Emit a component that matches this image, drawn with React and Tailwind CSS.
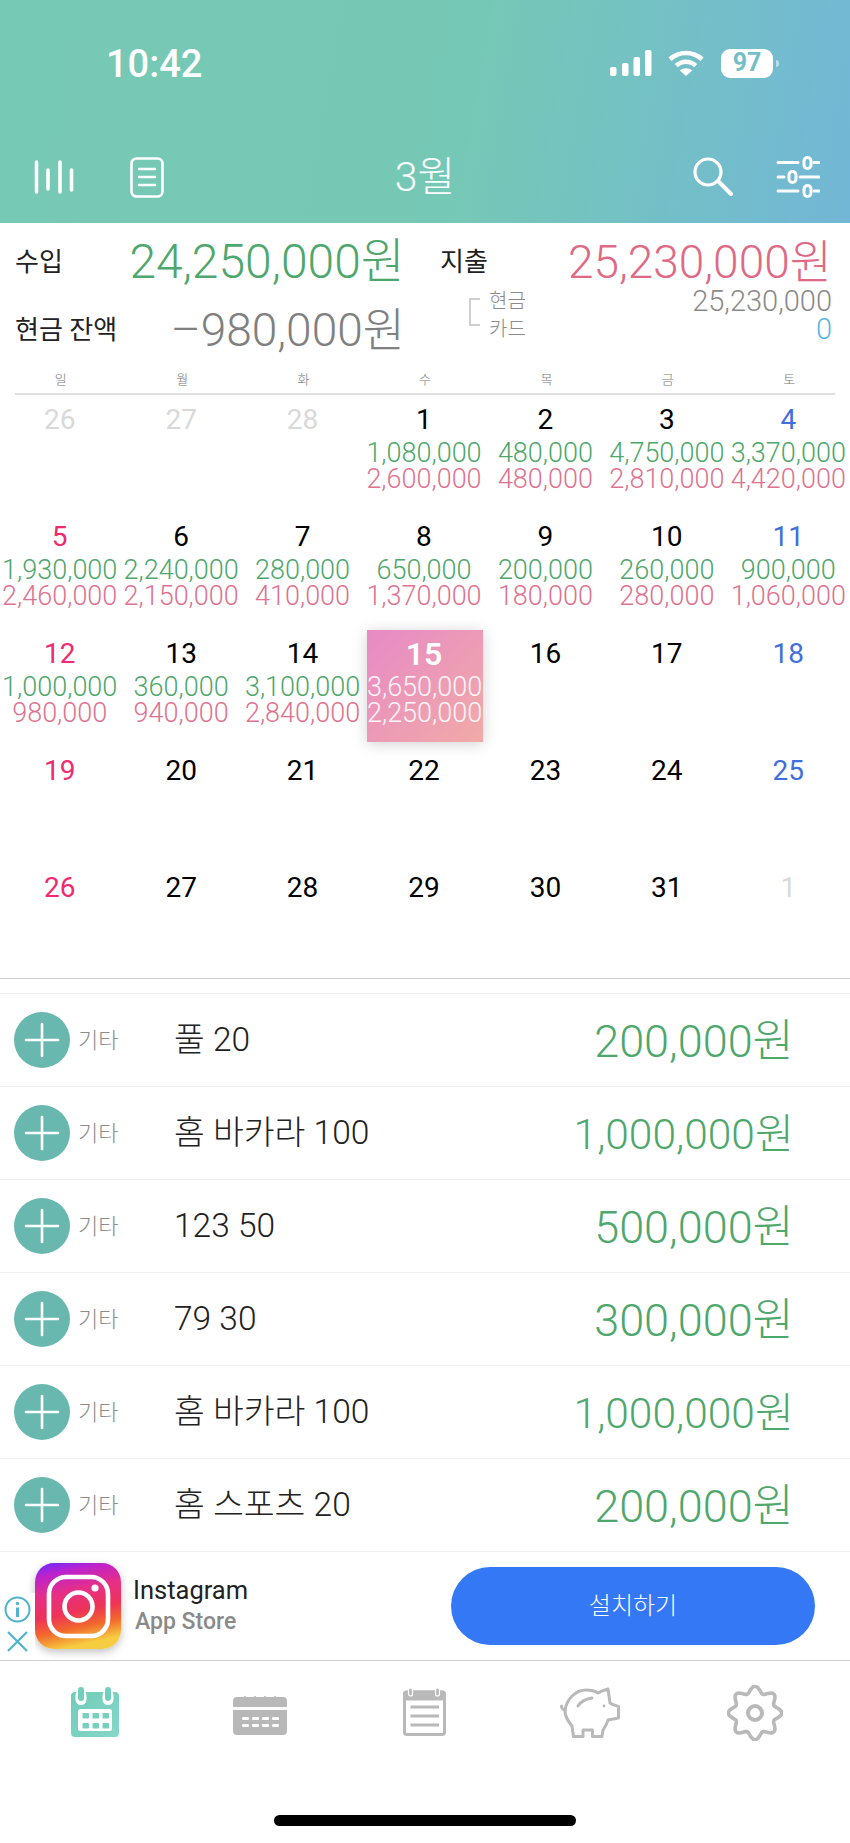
import React from "react";

const WEEK = ["일", "월", "화", "수", "목", "금", "토"];
const G = "text-[#4ea76c]";
const R = "text-[#de7390]";

const DAYS = [
  { d: "26", c: "text-[#d9d9d9]" }, { d: "27", c: "text-[#d9d9d9]" }, { d: "28", c: "text-[#d9d9d9]" },
  { d: "1", a: "1,080,000", b: "2,600,000" }, { d: "2", a: "480,000", b: "480,000" }, { d: "3", a: "4,750,000", b: "2,810,000" },
  { d: "4", c: "text-[#3f6fdc]", a: "3,370,000", b: "4,420,000" },
  { d: "5", c: "text-[#ef2a6f]", a: "1,930,000", b: "2,460,000" }, { d: "6", a: "2,240,000", b: "2,150,000" }, { d: "7", a: "280,000", b: "410,000" },
  { d: "8", a: "650,000", b: "1,370,000" }, { d: "9", a: "200,000", b: "180,000" }, { d: "10", a: "260,000", b: "280,000" },
  { d: "11", c: "text-[#3f6fdc]", a: "900,000", b: "1,060,000" },
  { d: "12", c: "text-[#ef2a6f]", a: "1,000,000", b: "980,000" }, { d: "13", a: "360,000", b: "940,000" }, { d: "14", a: "3,100,000", b: "2,840,000" },
  { d: "15", sel: true, a: "3,650,000", b: "2,250,000" }, { d: "16" }, { d: "17" }, { d: "18", c: "text-[#3f6fdc]" },
  { d: "19", c: "text-[#ef2a6f]" }, { d: "20" }, { d: "21" }, { d: "22" }, { d: "23" }, { d: "24" }, { d: "25", c: "text-[#3f6fdc]" },
  { d: "26", c: "text-[#ef2a6f]" }, { d: "27" }, { d: "28" }, { d: "29" }, { d: "30" }, { d: "31" }, { d: "1", c: "text-[#d9d9d9]" },
];

const ROWS = [
  ["풀 20", "200,000원", "text-[45px]"],
  ["홈 바카라 100", "1,000,000원", "text-[42.5px]"],
  ["123 50", "500,000원", "text-[45px]"],
  ["79 30", "300,000원", "text-[45px]"],
  ["홈 바카라 100", "1,000,000원", "text-[42.5px]"],
  ["홈 스포츠 20", "200,000원", "text-[45px]"],
];

function gearPath() {
  const pts = [];
  for (let i = 0; i < 160; i++) {
    const t = (i / 160) * Math.PI * 2;
    const r = 23.5 + 3.2 * Math.cos(8 * t);
    pts.push(`${(28 + r * Math.sin(t)).toFixed(2)},${(28 - r * Math.cos(t)).toFixed(2)}`);
  }
  return "M" + pts.join("L") + "Z";
}

const Signal = () => (
  <svg width="42" height="26" viewBox="0 0 42 26" fill="white">
    <rect x="0" y="17" width="6.5" height="9" rx="2" />
    <rect x="12" y="13" width="6.5" height="13" rx="2" />
    <rect x="23.5" y="7" width="6.5" height="19" rx="2" />
    <rect x="35" y="0" width="6.5" height="26" rx="2" />
  </svg>
);
const Wifi = () => (
  <svg width="36" height="26" viewBox="0 0 36 26" fill="none" stroke="white" strokeWidth="4.6">
    <path d="M2 9.2C11 .9 25 .9 34 9.2" />
    <path d="M8.3 15.6C14 10.4 22 10.4 27.7 15.6" />
    <path d="M18 26L11.8 20.4C15.4 17.6 20.6 17.6 24.2 20.4Z" fill="white" stroke="none" />
  </svg>
);
const BarsIcon = () => (
  <svg width="40" height="34" viewBox="0 0 40 34" stroke="white" strokeWidth="3.6" strokeLinecap="round">
    <path d="M2.5 2V32M14 10V29M26 2V32M37.5 10V30" />
  </svg>
);
const DocIcon = () => (
  <svg width="34" height="41" viewBox="0 0 34 41" fill="none" stroke="white" strokeWidth="2.6" strokeLinecap="round">
    <rect x="1.5" y="1.5" width="31" height="38" rx="5" />
    <path d="M9 12H25M9 20H25M9 28H25" />
  </svg>
);
const SearchIcon = () => (
  <svg width="40" height="40" viewBox="0 0 40 40" fill="none" stroke="white" strokeWidth="3.2" strokeLinecap="round">
    <circle cx="15" cy="15" r="13" />
    <path d="M26 25L38 37" strokeWidth="4" />
  </svg>
);
const SlidersIcon = () => (
  <svg width="44" height="42" viewBox="0 0 44 42" fill="none" stroke="white" strokeWidth="3" strokeLinecap="round">
    <path d="M2 6.5H22M38 6.5H43M2 21H8M24 21H43M2 35H22M38 35H43" />
    <rect x="28" y="1.5" width="7" height="11" rx="3.5" />
    <rect x="13" y="15.5" width="7" height="11" rx="3.5" />
    <rect x="28" y="29.5" width="7" height="11" rx="3.5" />
  </svg>
);

const TabCalendar = () => (
  <svg width="48" height="50" viewBox="0 0 48 50">
    <defs>
      <linearGradient id="tabg" x1="0" y1="0" x2="1" y2="1">
        <stop offset="0" stopColor="#6fcdb8" />
        <stop offset="1" stopColor="#86d6c8" />
      </linearGradient>
    </defs>
    <rect x="0" y="5" width="48" height="45" rx="4" fill="url(#tabg)" />
    <rect x="4.5" y="3" width="11" height="15" rx="5.5" fill="white" />
    <rect x="31.5" y="3" width="11" height="15" rx="5.5" fill="white" />
    <rect x="7" y="0" width="6" height="14" rx="3" fill="#72cfbb" />
    <rect x="34" y="0" width="6" height="14" rx="3" fill="#72cfbb" />
    <rect x="7" y="22" width="34" height="22" rx="2.5" fill="white" />
    {[11.5, 21.5, 31.5].map((x) =>
      [26, 36].map((y) => <rect key={x + "-" + y} x={x} y={y} width="6.5" height="5.5" rx="1" fill="#76d0bd" />)
    )}
  </svg>
);
const TabMonth = () => (
  <svg className="mt-[8px]" width="54" height="40" viewBox="0 0 54 40" fill="#b8b8b8">
    <path d="M0 11V5a4 4 0 0 1 4-4h46a4 4 0 0 1 4 4v6Z" />
    <path d="M0 14H54V35a4 4 0 0 1-4 4H4a4 4 0 0 1-4-4Z" />
    {[12, 22, 32, 42].map((x) => <rect key={x} x={x - 0.8} y="0" width="1.6" height="3" />)}
    {[9, 19, 29, 39].map((x) =>
      [21, 28].map((y) => <rect key={x + "-" + y} x={x} y={y} width="7" height="3" rx="1.2" fill="white" />)
    )}
  </svg>
);
const TabNote = () => (
  <svg width="43" height="48" viewBox="0 0 43 48" fill="none" stroke="#b9b9b9" strokeWidth="3">
    <rect x="1.5" y="4" width="40" height="42.5" rx="2.5" />
    <path d="M1.5 6.5a2.5 2.5 0 0 1 2.5-2.5H39a2.5 2.5 0 0 1 2.5 2.5V11H1.5Z" fill="#b9b9b9" />
    <path d="M7.5 19H36M7.5 28H36M7.5 37H36" />
    <rect x="5.5" y="0" width="4" height="8" rx="2" fill="#b9b9b9" stroke="white" strokeWidth="1.2" />
    <rect x="32.5" y="0" width="4" height="8" rx="2" fill="#b9b9b9" stroke="white" strokeWidth="1.2" />
  </svg>
);
const TabPig = () => (
  <svg width="60" height="51" viewBox="0 0 60 51" fill="none" stroke="#b9b9b9" strokeWidth="3" strokeLinejoin="round" strokeLinecap="round">
    <path d="M48 2L50 16C53 18 54 18 58.5 19.5V31L48 33C47 37 45 40 43 43L42 49.5H32.5V43H23V49.5H13.5L12 39C8 34 5 30 5 24C6 12 16 3 26 3C31 3 35 4 38 6C41 4 44 3 48 2Z" />
    <path d="M5 23C3 23 1.5 21 1.5 19" />
    <path d="M18 19C21 14 26 12 32 11" />
    <circle cx="44" cy="19" r="1.4" fill="#b9b9b9" stroke="none" />
  </svg>
);
const TabGear = () => (
  <svg className="mt-[2px]" width="56" height="56" viewBox="0 0 56 56" fill="none" stroke="#b9b9b9">
    <path d={gearPath()} strokeWidth="3.6" strokeLinejoin="round" />
    <circle cx="28" cy="28" r="7" strokeWidth="4" />
  </svg>
);

const InstaIcon = () => (
  <svg width="86" height="86" viewBox="0 0 86 86" className="block">
    <defs>
      <linearGradient id="ig" x1="0.1" y1="0" x2="0.32" y2="1">
        <stop offset="0" stopColor="#6a2cf8" />
        <stop offset="0.14" stopColor="#bb22cf" />
        <stop offset="0.38" stopColor="#e62f86" />
        <stop offset="0.62" stopColor="#ee3358" />
        <stop offset="0.8" stopColor="#f2682c" />
        <stop offset="1" stopColor="#f6cd40" />
      </linearGradient>
    </defs>
    <rect width="86" height="86" rx="19" fill="url(#ig)" />
    <rect x="14" y="14" width="59" height="59" rx="17" fill="none" stroke="white" strokeWidth="4.6" />
    <circle cx="43.5" cy="43.5" r="14" fill="none" stroke="white" strokeWidth="4.6" />
    <circle cx="60" cy="25" r="3.6" fill="white" />
  </svg>
);

function Cell({ x }) {
  const inner = (
    <>
      <div className={`h-[28px] leading-[28px] ${x.sel ? "text-[32px] font-semibold text-white" : `text-[28px] font-normal ${x.c || "text-black"}`}`}>{x.d}</div>
      <div className={`mt-[6px] text-[27px] leading-[26px] ${x.sel ? "text-white/90" : G}`}>{x.a}</div>
      <div className={`text-[27px] leading-[26px] ${x.sel ? "text-white/90" : R}`}>{x.b}</div>
    </>
  );
  return (
    <div className="whitespace-nowrap text-center">
      {x.sel ? (
        <div className="mx-auto h-[112px] w-[116px] bg-[linear-gradient(135deg,#e78ac5,#f1aaa8)] pr-[2px] pt-[10px] shadow-[0_2px_14px_rgba(0,0,0,0.18)]">{inner}</div>
      ) : (
        <div className="pr-[2px] pt-[10px]">{inner}</div>
      )}
    </div>
  );
}

export default function App() {
  return (
    <div className="relative h-[1843px] w-[850px] overflow-hidden bg-white font-['Roboto','Noto_Sans_CJK_KR',sans-serif] font-light">
      <header className="h-[223px] bg-[linear-gradient(100deg,#76c9b4_0%,#76c8b6_55%,#72b7d6_100%)] pt-[48px]">
        <div className="flex h-[30px] items-center pl-[106px] pr-[77px]">
          <span className="pt-[1px] text-[38px] font-medium leading-none text-white">10:42</span>
          <div className="ml-auto flex items-center">
            <Signal />
            <div className="ml-[16px]"><Wifi /></div>
            <div className="relative ml-[17px] flex h-[29px] w-[52px] items-center justify-center rounded-[9px] bg-white text-[25px] font-bold text-[#74bfc6]">
              97
              <div className="absolute right-[-6px] top-[11px] h-[7px] w-[3px] rounded-r-full bg-white/50" />
            </div>
          </div>
        </div>
        <div className="mt-[78px] grid h-[42px] grid-cols-3 items-center pl-[34px] pr-[30px]">
          <div className="flex items-center gap-[56px]"><BarsIcon /><DocIcon /></div>
          <div className="pr-[4px] text-center text-[41px] leading-none text-white">3월</div>
          <div className="flex items-center justify-end gap-[43px]"><SearchIcon /><SlidersIcon /></div>
        </div>
      </header>

      <section className="h-[173px]">
        <div className="flex h-[143px] pl-[15px] pt-[17px]">
          <div className="w-[390px]">
            <div className="flex h-[44px] items-center justify-between">
              <span className="text-[26px] font-normal text-[#222]">수입</span>
              <span className={`text-[48px] leading-none ${G}`}>24,250,000원</span>
            </div>
            <div className="mt-[24px] flex h-[44px] items-center justify-between">
              <span className="text-[26px] font-normal text-[#222]">현금 잔액</span>
              <span className="text-[46px] leading-none text-[#808080]">–980,000원</span>
            </div>
          </div>
          <div className="ml-[35px] w-[392px]">
            <div className="flex h-[44px] items-center justify-between">
              <span className="text-[26px] font-normal text-[#222]">지출</span>
              <span className="text-[46px] leading-none text-[#de6a86]">25,230,000원</span>
            </div>
            <div className="mt-[3px] flex">
              <div className="ml-[29px] mt-[11px] h-[28px] w-[11px] border-y-2 border-l-2 border-[#cfcfcf]" />
              <div className="ml-[9px] text-[20px] leading-[28px] text-[#8a8a8a]">
                <div>현금</div>
                <div>카드</div>
              </div>
              <div className="ml-auto text-right text-[29px] leading-[28px]">
                <div className="text-[#8a8a8a]">25,230,000</div>
                <div className="text-[#5eb6dc]">0</div>
              </div>
            </div>
          </div>
        </div>
        <div className="grid h-[27px] grid-cols-7 items-center text-center text-[13px] text-[#777]">
          {WEEK.map((w) => <div key={w}>{w}</div>)}
        </div>
        <div className="mx-[15px] h-[2px] bg-[#e0e0e0]" />
      </section>

      <section className="grid h-[583px] grid-cols-7 auto-rows-[117px] overflow-hidden border-b border-[#cfcfcf]">
        {DAYS.map((x, i) => <Cell key={i} x={x} />)}
      </section>

      <section className="mt-[14px] border-t border-[#f0f0f0]">
        {ROWS.map(([t, v, s], i) => (
          <div key={i} className="flex h-[93px] items-center border-b border-[#f0f0f0] pl-[14px] pr-[56px]">
            <div className="flex h-[56px] w-[56px] items-center justify-center rounded-full bg-[#69b8b0]">
              <svg width="36" height="36" viewBox="0 0 36 36" stroke="white" strokeWidth="2.6" strokeLinecap="round">
                <path d="M18 2V34M2 18H34" />
              </svg>
            </div>
            <span className="ml-[8px] w-[96px] text-[22px] text-[#8c8c8c]">기타</span>
            <span className="pt-[1px] text-[33.5px] text-[#222]">{t}</span>
            <span className={`ml-auto pt-[3px] ${s} ${G}`}>{v}</span>
          </div>
        ))}
      </section>

      <section className="relative flex h-[109px] items-center border-b border-[#cfcfcf] pl-[35px] pr-[35px]">
        <div className="rounded-[19px] shadow-[0_3px_8px_rgba(0,0,0,0.25)]"><InstaIcon /></div>
        <div className="ml-[12px] pb-[3px]">
          <div className="text-[25.5px] font-normal leading-[30px] text-[#222]">Instagram</div>
          <div className="ml-[2px] mt-[4px] text-[23px] font-medium leading-[26px] text-[#8a8a8a]">App Store</div>
        </div>
        <button className="ml-auto h-[78px] w-[364px] rounded-full bg-[#3478f6] text-center text-[24px] text-white">설치하기</button>
        <div className="absolute left-0 top-[41px] flex h-[65px] w-[35px] flex-col items-center bg-white pr-[1px] pt-[3px]">
          <svg width="27" height="27" viewBox="0 0 27 27" fill="none" stroke="#4fb3cd" strokeWidth="2">
            <circle cx="13.5" cy="13.5" r="12" />
            <circle cx="13.5" cy="7.5" r="1.7" fill="#4fb3cd" stroke="none" />
            <path d="M13.5 11.5V21" strokeWidth="3" />
          </svg>
          <svg className="mt-[8px]" width="21" height="21" viewBox="0 0 21 21" stroke="#4fb3cd" strokeWidth="2.2">
            <path d="M1 1L20 20M20 1L1 20" />
          </svg>
        </div>
      </section>

      <nav className="grid h-[102px] grid-cols-5 items-center justify-items-center px-[13px]">
        <TabCalendar />
        <TabMonth />
        <TabNote />
        <TabPig />
        <TabGear />
      </nav>
      <div className="mx-auto mt-[52px] h-[11px] w-[302px] rounded-full bg-black" />
    </div>
  );
}
